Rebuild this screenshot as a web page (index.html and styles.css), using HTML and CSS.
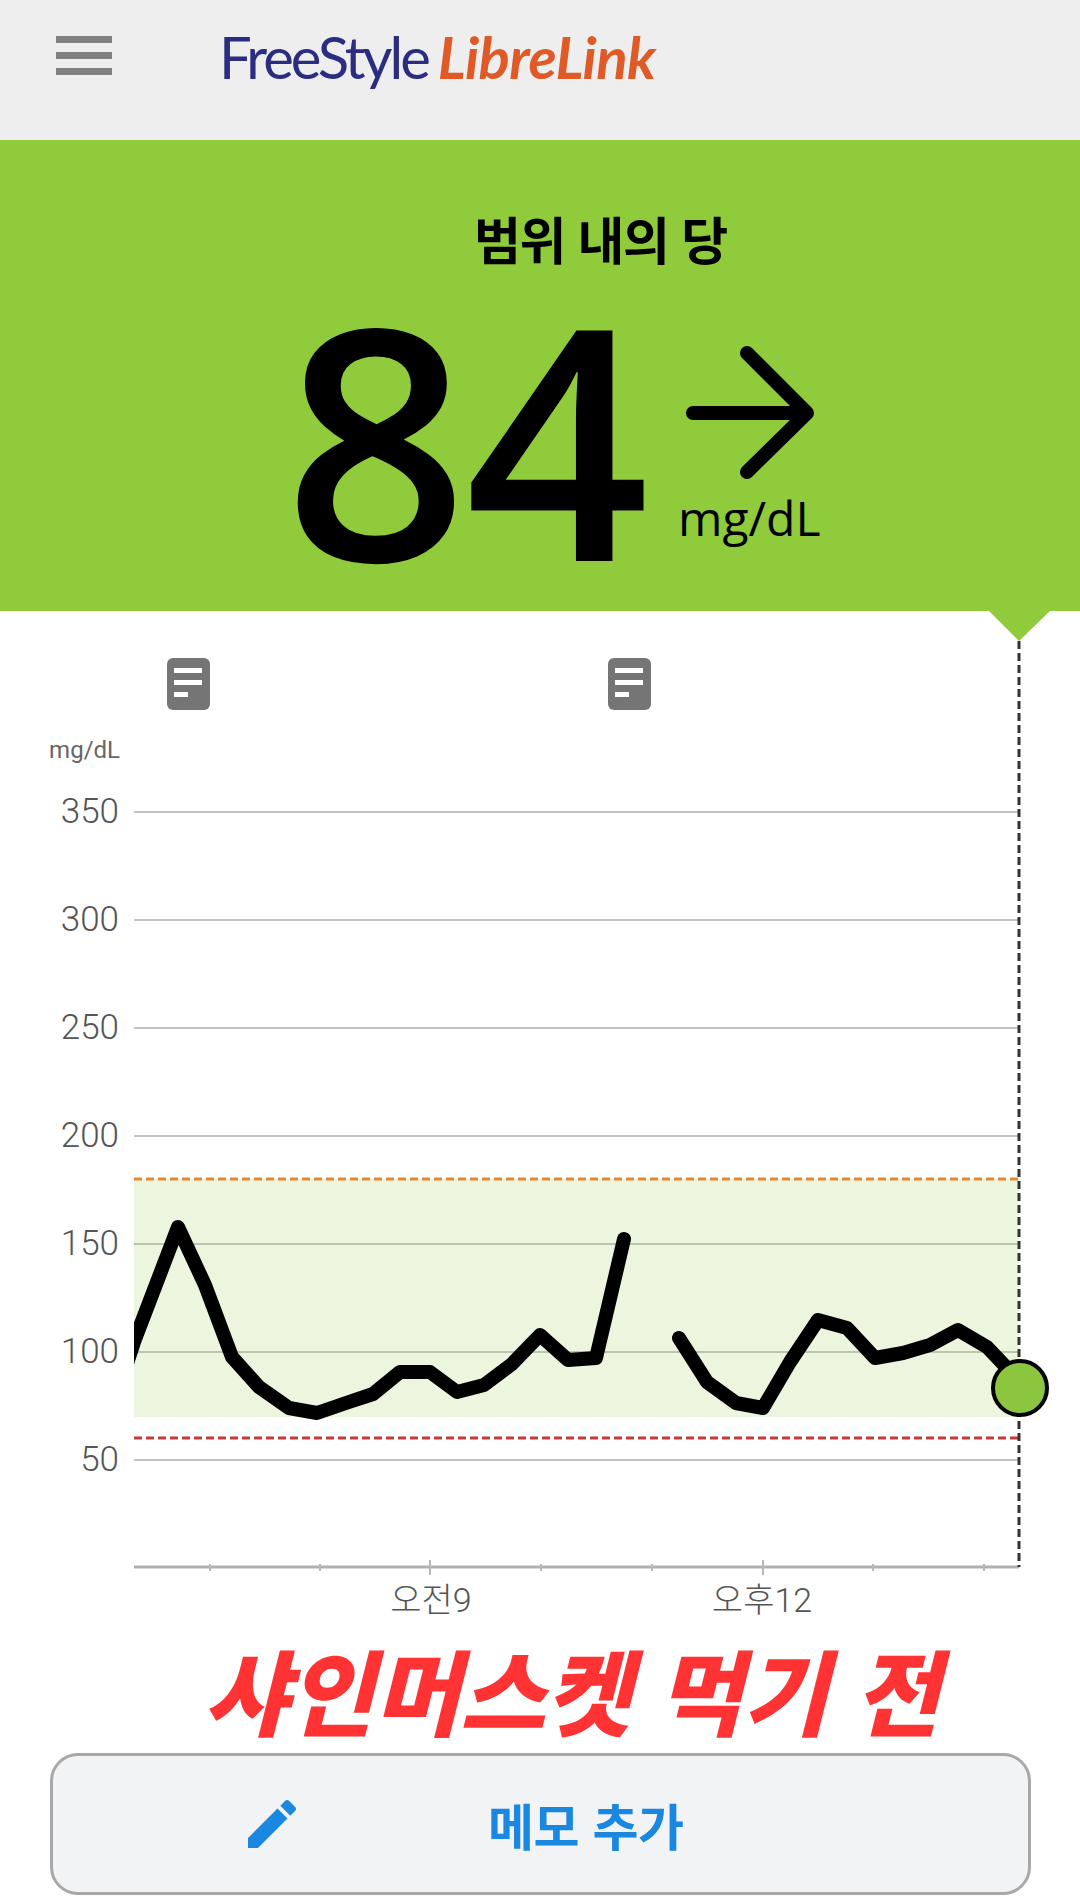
FILE: index.html
```html
<!DOCTYPE html>
<html lang="ko">
<head>
    <meta charset="UTF-8">
    <meta name="viewport" content="width=device-width, initial-scale=1.0">
    <title>FreeStyle LibreLink</title>
    <link rel="stylesheet" href="styles.css">
</head>
<body>

    <!-- Top bar -->
    <header class="topbar">
        <div class="menu-icon"><span></span><span></span><span></span></div>
        <div class="logo">
            <span class="logo-free">FreeStyle</span>
            <span class="logo-libre">LibreLink</span>
        </div>
    </header>

    <!-- Current reading -->
    <section class="reading">
        <h2 class="status">범위 내의 당</h2>
        <div class="value-row">
            <div class="value">84</div>
            <div class="trend">
                <svg class="trend-arrow" width="144" height="134" viewBox="0 0 144 134">
                    <path d="M14 67H128M68 7L128 67L68 126"/>
                </svg>
                <div class="unit">mg/dL</div>
            </div>
        </div>
    </section>

    <!-- Glucose graph, coordinates are page pixels -->
    <svg class="graph" width="1080" height="1029" viewBox="0 611 1080 1029">
        <path class="marker" d="M989 611H1050L1019 641Z"/>

        <g class="note-icon">
            <rect x="167" y="658" width="43" height="52" rx="6"/>
            <path d="M174 668H202V673H174ZM174 680H202V685H174ZM174 692H188V697H174Z"/>
        </g>
        <g class="note-icon">
            <rect x="608" y="658" width="43" height="52" rx="6"/>
            <path d="M615 668H643V673H615ZM615 680H643V685H615ZM615 692H629V697H615Z"/>
        </g>

        <text class="axis-unit" x="120" y="758">mg/dL</text>

        <g class="grid">
            <path d="M134 812H1019M134 920H1019M134 1028H1019M134 1136H1019M134 1244H1019M134 1352H1019M134 1460H1019"/>
        </g>
        <g class="axis-labels">
            <text x="119" y="823">350</text>
            <text x="119" y="931">300</text>
            <text x="119" y="1039">250</text>
            <text x="119" y="1147">200</text>
            <text x="119" y="1255">150</text>
            <text x="119" y="1363">100</text>
            <text x="119" y="1471">50</text>
        </g>

        <rect class="target-band" x="134" y="1179" width="885" height="238"/>
        <path class="limit-high" d="M134 1179H1019"/>
        <path class="limit-low" d="M134 1438H1019"/>

        <path class="x-axis" d="M134 1567H1019"/>
        <path class="ticks" d="M210 1564V1571M320 1564V1571M430 1560V1575M541 1564V1571M652 1564V1571M763 1560V1575M873 1564V1571M984 1564V1571"/>
        <text class="x-label" x="431" y="1612">오전9</text>
        <text class="x-label" x="762" y="1612">오후12</text>

        <path class="now-line" d="M1019 641V1567"/>

        <svg x="134" y="1150" width="950" height="300" viewBox="134 1150 950 300">
            <polyline class="trace" points="120,1385 134,1342 178,1227 205,1285 232,1357 259,1387 289,1408 317,1413 346,1403 373,1394 400,1372 430,1372 457,1392 484,1385 512,1364 540,1335 568,1360 596,1358 624,1239"/>
            <polyline class="trace" points="679,1338 707,1382 736,1403 763,1408 790,1362 818,1320 847,1328 875,1358 903,1353 930,1345 958,1330 987,1347 1007,1368 1021,1388"/>
            <circle class="now-dot" cx="1020" cy="1388" r="27"/>
        </svg>
    </svg>

    <p class="caption">샤인머스켓 먹기 전</p>

    <button class="add-note">
        <svg class="pencil" width="64" height="64" viewBox="0 0 24 24">
            <path d="M3 17.25V21h3.75L17.81 9.94l-3.75-3.75L3 17.25zM20.71 7.04c.39-.39.39-1.02 0-1.41l-2.34-2.34c-.39-.39-1.02-.39-1.41 0l-1.83 1.83 3.75 3.75 1.83-1.83z"/>
        </svg>
        <span class="add-note-text">메모 추가</span>
    </button>

</body>
</html>
```

FILE: styles.css
```css
* {
    margin: 0;
    padding: 0;
    box-sizing: border-box;
}

body {
    width: 1080px;
    height: 1902px;
    background: #fff;
    font-family: 'Open Sans', 'Noto Sans CJK KR', sans-serif;
    overflow: hidden;
}

.topbar {
    height: 140px;
    background: #eeeeee;
    display: flex;
    align-items: flex-start;
    padding: 36px 0 0 56px;
}

.menu-icon {
    width: 56px;
    display: flex;
    flex-direction: column;
    gap: 9px;
}

.menu-icon span {
    height: 7px;
    background: #808080;
}

.logo {
    display: flex;
    align-items: baseline;
    gap: 10px;
    margin: -14px 0 0 107px;
    font-family: Lato, sans-serif;
    font-size: 58px;
    line-height: 70px;
    white-space: nowrap;
}

.logo-free {
    color: #2b2d82;
    letter-spacing: -3px;
}

.logo-libre {
    color: #e05a28;
    font-weight: 700;
    font-style: italic;
    letter-spacing: -0.6px;
}

.reading {
    height: 471px;
    background: #8fcb3a;
    padding-top: 68px;
    color: #000;
}

.status {
    font-family: 'Noto Sans CJK KR', sans-serif;
    font-size: 51px;
    font-weight: 700;
    line-height: 60px;
    letter-spacing: -1.5px;
    margin-left: 474px;
}

.value-row {
    display: flex;
    margin: 18px 0 0 284px;
}

.value {
    font-size: 322px;
    font-weight: 600;
    line-height: 300px;
    width: 388px;
    letter-spacing: -3px;
}

.trend {
    margin-top: 60px;
}

.trend-arrow {
    display: block;
    fill: none;
    stroke: #000;
    stroke-width: 14;
    stroke-linecap: round;
    stroke-linejoin: round;
    margin-left: 7px;
}

.unit {
    font-size: 48px;
    line-height: 60px;
    margin: 8px 0 0 6px;
}

.graph {
    display: block;
}

.marker {
    fill: #8fcb3a;
}

.note-icon rect {
    fill: #757575;
}

.note-icon path {
    fill: #fff;
}

.axis-unit {
    font-family: Roboto, sans-serif;
    font-size: 24px;
    fill: #666;
    text-anchor: end;
}

.axis-labels text {
    font-family: Roboto, sans-serif;
    font-size: 35px;
    font-weight: 300;
    fill: #555;
    text-anchor: end;
}

.grid path {
    stroke: #c4c4c4;
    stroke-width: 2;
    fill: none;
}

.target-band {
    fill: rgba(143, 203, 58, 0.17);
}

.limit-high {
    stroke: #e08a2a;
    stroke-width: 3;
    stroke-dasharray: 8 4;
}

.limit-low {
    stroke: #c43a3a;
    stroke-width: 3;
    stroke-dasharray: 8 4;
}

.x-axis {
    stroke: #b0b0b0;
    stroke-width: 3;
}

.ticks {
    stroke: #b8b8b8;
    stroke-width: 2;
}

.x-label {
    font-family: Roboto, 'Noto Sans CJK KR', sans-serif;
    font-size: 34px;
    font-weight: 300;
    fill: #555;
    text-anchor: middle;
}

.now-line {
    stroke: #333;
    stroke-width: 3;
    stroke-dasharray: 8 4;
}

.trace {
    fill: none;
    stroke: #000;
    stroke-width: 14;
    stroke-linecap: round;
    stroke-linejoin: round;
}

.now-dot {
    fill: #8cc63f;
    stroke: #000;
    stroke-width: 4;
}

.caption {
    font-family: 'Noto Sans CJK KR', sans-serif;
    font-size: 93px;
    font-weight: 800;
    font-style: italic;
    line-height: 113px;
    color: #ff3333;
    margin: -8px 0 8px 203px;
    white-space: nowrap;
}

.add-note {
    display: flex;
    align-items: center;
    width: 981px;
    height: 142px;
    margin-left: 50px;
    padding-left: 187px;
    background: #f2f3f5;
    border: 3px solid #a8a8a8;
    border-radius: 28px;
    font-family: 'Noto Sans CJK KR', sans-serif;
}

.pencil {
    fill: #1a87e0;
}

.add-note-text {
    font-size: 50px;
    font-weight: 700;
    letter-spacing: -0.5px;
    color: #1a87e0;
    margin-left: 184px;
}
```
